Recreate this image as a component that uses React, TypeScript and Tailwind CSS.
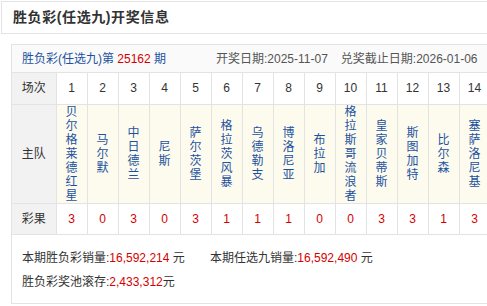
const teams = [
  "贝尔格莱德红星",
  "马尔默",
  "中日德兰",
  "尼斯",
  "萨尔茨堡",
  "格拉茨风暴",
  "乌德勒支",
  "博洛尼亚",
  "布拉加",
  "格拉斯哥流浪者",
  "皇家贝蒂斯",
  "斯图加特",
  "比尔森",
  "塞萨洛尼基",
];

const results = ["3", "0", "3", "0", "3", "1", "1", "1", "0", "0", "3", "3", "1", "3"];

export default function App() {
  return (
    <div className="w-[487px] h-[306px] overflow-hidden bg-white text-[12px] text-[#333] font-['Liberation_Sans','Noto_Sans_CJK_SC',sans-serif]">
      <div className="w-[560px] pt-px pl-px">
        <div className="h-[33px] border border-[#e3e3e3] pl-[11px] flex items-center">
          <h1 className="text-[14px] font-bold text-[#333] tracking-[0.6px]">胜负彩(任选九)开奖信息</h1>
        </div>

        <div className="mt-[10px] ml-[10px] border border-[#e3e3e3]">
          <div className="h-[28px] bg-[#fafafa] border-b border-[#e3e3e3] flex items-center pl-[10px]">
            <span className="w-[194px] text-[#1c52a0]">
              胜负彩(任选九)第 <span className="text-[#d40000]">25162</span> 期
            </span>
            <span className="text-[#555]">开奖日期:2025-11-07</span>
            <span className="ml-[13px] text-[#555]">兑奖截止日期:2026-01-06</span>
          </div>

          <table className="border-collapse table-fixed">
            <tbody>
              <tr className="h-[31px]">
                <td className="w-[44px] bg-[#f2f2f2] border-r border-b border-[#e3e3e3] text-center">场次</td>
                {teams.map((_, i) => (
                  <td key={i} className="w-[31px] border border-t-0 border-[#e3e3e3] text-center">
                    {i + 1}
                  </td>
                ))}
              </tr>
              <tr className="h-[99px]">
                <td className="bg-[#f2f2f2] border-r border-b border-[#e3e3e3] text-center">主队</td>
                {teams.map((t) => (
                  <td key={t} className="border border-[#e3e3e3] bg-[#fdfbee] text-center align-middle">
                    <div className="flex flex-col items-center text-[#1c52a0] leading-[14px]">
                      {t.split("").map((c, j) => (
                        <span key={j}>{c}</span>
                      ))}
                    </div>
                  </td>
                ))}
              </tr>
              <tr className="h-[31px]">
                <td className="bg-[#f2f2f2] border-r border-[#e3e3e3] text-center">彩果</td>
                {results.map((r, i) => (
                  <td key={i} className="border border-b-0 border-[#e3e3e3] text-center text-[#d40000]">
                    {r}
                  </td>
                ))}
              </tr>
            </tbody>
          </table>

          <div className="border-t border-[#e3e3e3] h-[69px] pl-[10px] pt-[11px] leading-[24px]">
            <div className="flex">
              <span className="w-[188px]">
                本期胜负彩销量:<span className="text-[#d40000]">16,592,214</span> 元
              </span>
              <span>
                本期任选九销量:<span className="text-[#d40000]">16,592,490</span> 元
              </span>
            </div>
            <div>
              胜负彩奖池滚存:<span className="text-[#d40000]">2,433,312</span>元
            </div>
          </div>
        </div>
      </div>
    </div>
  );
}
